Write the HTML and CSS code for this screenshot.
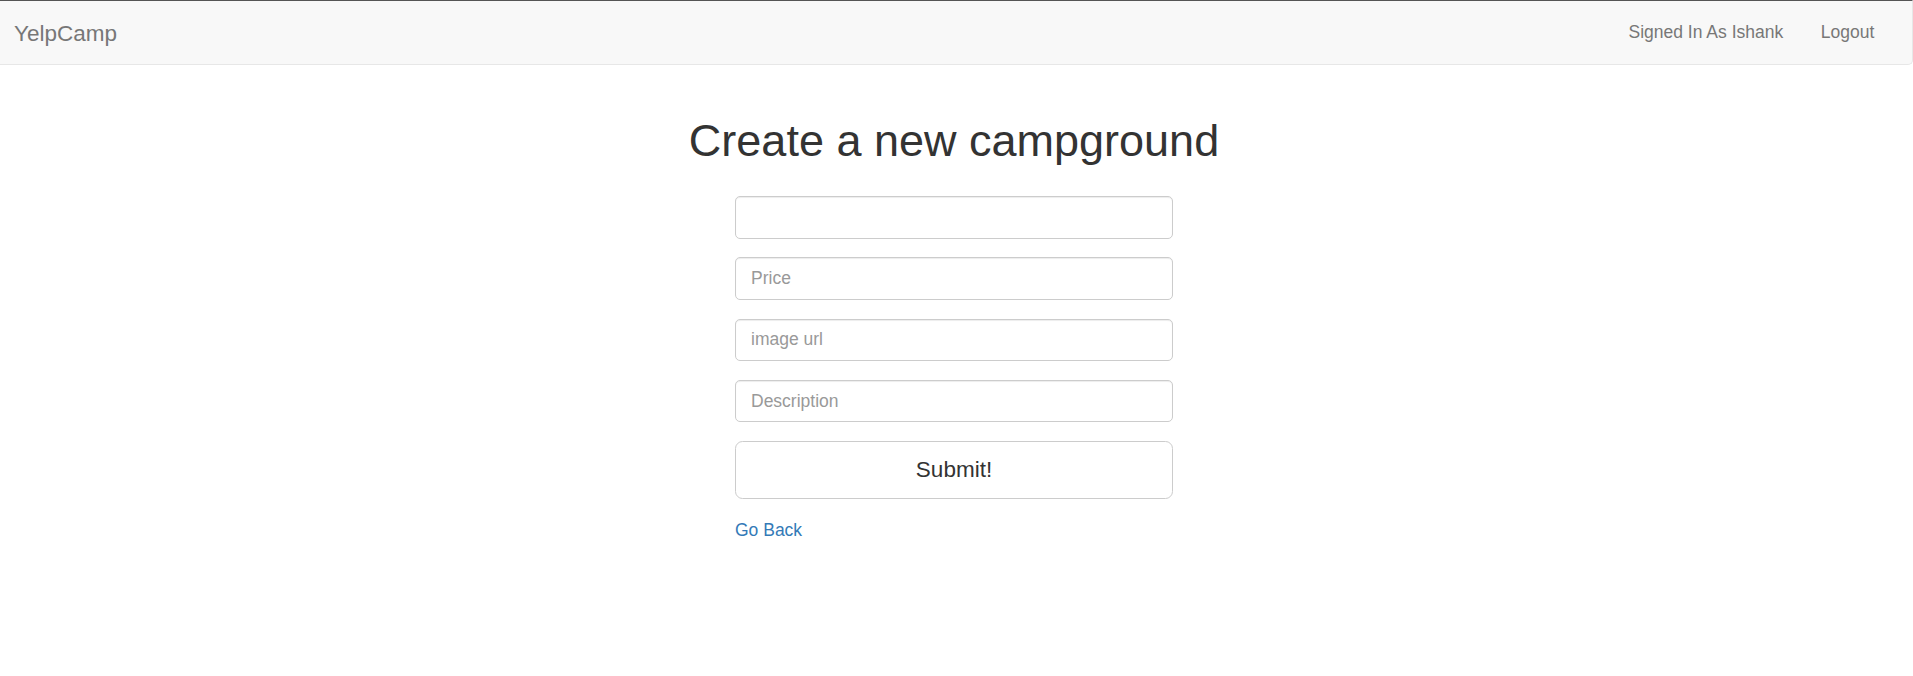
FILE: index.html
```html
<!DOCTYPE html>
<html lang="en">
<head>
<meta charset="utf-8">
<title>YelpCamp</title>
<link rel="stylesheet" href="styles.css">
</head>
<body>
<nav class="navbar">
  <a class="brand" href="#">YelpCamp</a>
  <ul class="nav-right">
    <li><a href="#">Signed In As Ishank</a></li>
    <li><a href="#">Logout</a></li>
  </ul>
</nav>
<main class="content">
  <h1 class="title">Create a new campground</h1>
  <form class="camp-form">
    <input class="field" type="text" name="name" placeholder="">
    <input class="field" type="text" name="price" placeholder="Price">
    <input class="field" type="text" name="image" placeholder="image url">
    <input class="field" type="text" name="description" placeholder="Description">
    <button class="submit" type="button">Submit!</button>
    <a class="back" href="#">Go Back</a>
  </form>
</main>
</body>
</html>
```
FILE: styles.css
```css
* { box-sizing: border-box; }
html, body {
  margin: 0;
  background: #fff;
  font-family: "Liberation Sans", Arial, Helvetica, sans-serif;
  color: #333;
}
.navbar {
  display: flex;
  align-items: center;
  justify-content: space-between;
  height: 65px;
  background: #f8f8f8;
  border-top: 1px solid #555;
  border-bottom: 1px solid #e7e7e7;
  border-right: 1px solid #e7e7e7;
  border-bottom-right-radius: 5px;
  padding: 0 19px 0 14px;
}
.brand {
  font-size: 22.5px;
  line-height: 25px;
  color: #777;
  text-decoration: none;
  margin-top: 1px;
}
.nav-right {
  display: flex;
  list-style: none;
  margin: 0;
  padding: 0;
}
.nav-right a {
  display: block;
  padding: 0 18.75px;
  font-size: 17.5px;
  line-height: 25px;
  color: #777;
  text-decoration: none;
}
.content {
  display: flex;
  flex-direction: column;
  align-items: center;
  padding-right: 5px;
}
.title {
  margin: 51px 0 30.5px;
  font-size: 45px;
  font-weight: 500;
  line-height: 49.5px;
  color: #333;
}
.camp-form {
  width: 438px;
  display: flex;
  flex-direction: column;
}
.field {
  display: block;
  width: 100%;
  height: 42.5px;
  margin: 0 0 18.75px;
  padding: 0 15px;
  font-family: inherit;
  font-size: 17.5px;
  color: #555;
  background: #fff;
  border: 1px solid #ccc;
  border-radius: 5px;
  box-shadow: inset 0 1px 1px rgba(0,0,0,.075);
  outline: none;
}
.field::placeholder { color: #999; }
.submit {
  display: block;
  width: 100%;
  height: 57.5px;
  margin: 0;
  font-family: inherit;
  font-size: 22.5px;
  color: #333;
  background: #fff;
  border: 1px solid #ccc;
  border-radius: 7.5px;
}
.back {
  align-self: flex-start;
  margin-top: 19px;
  font-size: 17.5px;
  line-height: 25px;
  color: #337ab7;
  text-decoration: none;
}
```
